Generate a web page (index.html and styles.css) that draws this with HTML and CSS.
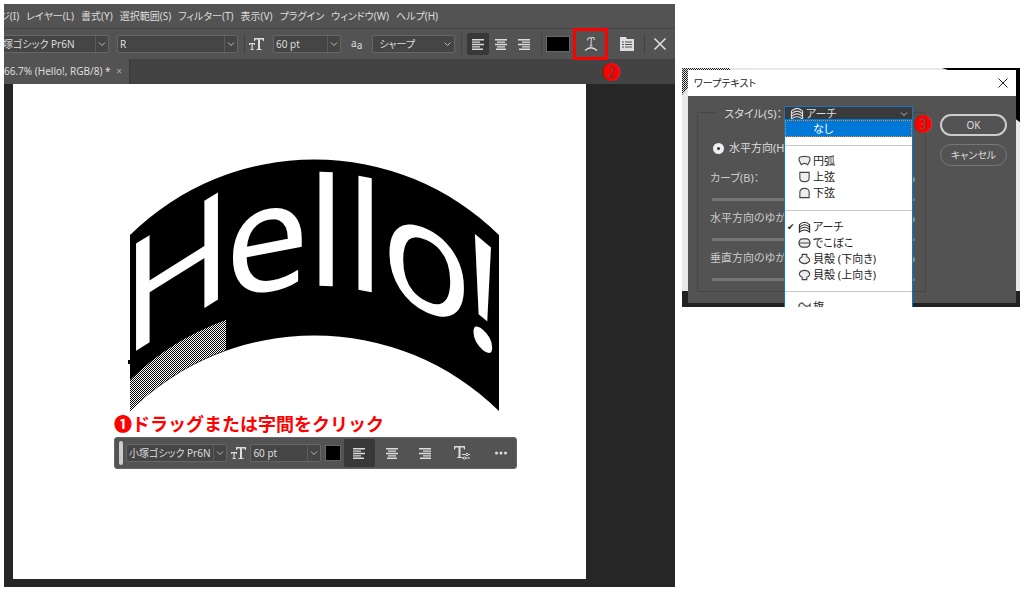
FILE: index.html
```html
<!DOCTYPE html>
<html lang="ja">
<head>
  <meta charset="UTF-8">
  <meta name="viewport" content="width=device-width, initial-scale=1.0">
  <title>ワープテキスト</title>
  <link rel="stylesheet" href="styles.css">
</head>
<body>
  <!-- shared icons -->
  <svg class="sprite" aria-hidden="true">
    <symbol id="chevron" viewBox="0 0 8 8"><path d="M1 2.500l3 3 3-3" fill="none" stroke="#bbb"/></symbol>
    <symbol id="text-size" viewBox="0 0 16 14">
      <path d="M5 1h10v3h-1l-.5-1.500H11V12h1.500v1h-5v-1H9V2.500H6.500L6 4H5z"/>
      <path d="M0 6h6v2h-.7L5 7.200H3.700V12h1v1H1.500v-1h1V7.200H1L.7 8H0z"/>
    </symbol>
    <symbol id="align-left" viewBox="0 0 14 12"><path d="M1 1h12v1.400H1zM1 3.400h8v1.400H1zM1 5.800h12v1.400H1zM1 8.200h8v1.400H1zM1 10.600h11V12H1z"/></symbol>
    <symbol id="align-center" viewBox="0 0 14 12"><path d="M1 1h12v1.400H1zM3 3.400h8v1.400H3zM1 5.800h12v1.400H1zM3 8.200h8v1.400H3zM2 10.600h10V12H2z"/></symbol>
    <symbol id="align-right" viewBox="0 0 14 12"><path d="M1 1h12v1.400H1zM5 3.400h8v1.400H5zM1 5.800h12v1.400H1zM5 8.200h8v1.400H5zM2 10.600h11V12H2z"/></symbol>
    <symbol id="arch" viewBox="0 0 14 14">
      <path d="M1 4.500Q7-1.500 13 4.500V13Q7 8 1 13zM1 7.300Q7 1.500 13 7.300M1 10.200Q7 4.500 13 10.200" fill="none" stroke="currentColor" stroke-width="1.200"/>
    </symbol>
  </svg>

  <div class="page">
    <main class="editor">
      <nav class="menubar">
        <a href="#">ジ(I)</a>
        <a href="#">レイヤー(L)</a>
        <a href="#">書式(Y)</a>
        <a href="#">選択範囲(S)</a>
        <a href="#">フィルター(T)</a>
        <a href="#">表示(V)</a>
        <a href="#">プラグイン</a>
        <a href="#">ウィンドウ(W)</a>
        <a href="#">ヘルプ(H)</a>
      </nav>

      <div class="options">
        <div class="field field-font">
          <select aria-label="フォント"><option>塚ゴシック Pr6N</option></select>
          <svg class="chevron"><use href="#chevron"/></svg>
        </div>
        <div class="field field-style">
          <select aria-label="フォントスタイル"><option>R</option></select>
          <svg class="chevron"><use href="#chevron"/></svg>
        </div>
        <span class="sep"></span>
        <svg class="icon-size"><use href="#text-size"/></svg>
        <div class="field field-size">
          <select aria-label="フォントサイズ"><option>60 pt</option></select>
          <svg class="chevron"><use href="#chevron"/></svg>
        </div>
        <span class="aa"><span class="aa-up">a</span>a</span>
        <div class="field field-alias">
          <select aria-label="アンチエイリアス"><option>シャープ</option></select>
          <svg class="chevron"><use href="#chevron"/></svg>
        </div>
        <span class="sep"></span>
        <div class="aligns">
          <button class="tool active" aria-label="左揃え"><svg class="icon-align"><use href="#align-left"/></svg></button>
          <button class="tool" aria-label="中央揃え"><svg class="icon-align"><use href="#align-center"/></svg></button>
          <button class="tool" aria-label="右揃え"><svg class="icon-align"><use href="#align-right"/></svg></button>
        </div>
        <span class="sep"></span>
        <button class="swatch swatch-wide" aria-label="テキストカラー"></button>
        <button class="warp-button" aria-label="ワープテキスト">
          <svg width="14" height="14" viewBox="0 0 14 14">
            <path d="M3.500 3.500l.5-2.500 6-.5.300 2.500M7.300 1L7 9M5.500 9l3-.2" fill="none" stroke="#ddd"/>
            <path d="M1 13.500Q7 8 13 13.500" fill="none" stroke="#ddd" stroke-width="1.200"/>
          </svg>
          <span class="step step-two">❷</span>
        </button>
        <button class="tool panel-button" aria-label="パネルの切り替え">
          <svg width="14" height="14" viewBox="0 0 14 14">
            <path d="M0 0h6l1 2h7v12H0z" fill="#ddd"/>
            <path d="M2 5h2M5 5h7M2 7.500h2M5 7.500h7M2 10h2M5 10h7" stroke="#535353" stroke-width="1.200"/>
          </svg>
        </button>
        <span class="sep"></span>
        <button class="tool cancel" aria-label="キャンセル">
          <svg width="14" height="14" viewBox="0 0 14 14"><path d="M1.500 1.500l11 11M12.500 1.500l-11 11" stroke="#ddd" stroke-width="1.600"/></svg>
        </button>
      </div>

      <div class="tabs">
        <div class="tab">66.7% (Hello!, RGB/8) * <button aria-label="閉じる">×</button></div>
      </div>

      <div class="workspace">
        <div class="document">
          <div class="artwork">
            <svg class="band" viewBox="0 0 371 253">
              <defs>
                <pattern id="checker" width="2" height="2" patternUnits="userSpaceOnUse">
                  <rect width="2" height="2" fill="#fff"/>
                  <path d="M0 0h1v1H0zM1 1h1v1H1z"/>
                </pattern>
              </defs>
              <path d="M2 77A263 263 0 0 1 371 77V253A263 263 0 0 0 2 253z"/>
              <path d="M2 222A263 263 0 0 1 98 162V192A263 263 0 0 0 2 253z" fill="url(#checker)"/>
              <path d="M0 202h4v4H0z"/>
            </svg>
            <div class="warp"><span class="w1">H</span><span class="w2">e</span><span class="w3">l</span><span class="w4">l</span><span class="w5">o</span><span class="w6">!</span></div>
          </div>

          <p class="caption">❶ドラッグまたは字間をクリック</p>

          <div class="taskbar">
            <span class="grip"></span>
            <div class="field field-task-font">
              <select aria-label="フォント"><option>小塚ゴシック Pr6N</option></select>
              <svg class="chevron"><use href="#chevron"/></svg>
            </div>
            <svg class="icon-size"><use href="#text-size"/></svg>
            <div class="field field-task-size">
              <select aria-label="フォントサイズ"><option>60 pt</option></select>
              <svg class="chevron"><use href="#chevron"/></svg>
            </div>
            <button class="swatch" aria-label="テキストカラー"></button>
            <button class="task active" aria-label="左揃え"><svg class="icon-align"><use href="#align-left"/></svg></button>
            <button class="task" aria-label="中央揃え"><svg class="icon-align"><use href="#align-center"/></svg></button>
            <button class="task" aria-label="右揃え"><svg class="icon-align"><use href="#align-right"/></svg></button>
            <button class="task task-text" aria-label="文字設定">
              <svg width="16" height="14" viewBox="0 0 16 14">
                <path d="M0 0h11v3.500h-1L9.500 1.500H6.500V11H8v1H3v-1h1.500V1.500H1.500L1 3.500H0z" fill="#ddd"/>
                <path d="M8 8.500h8M8 12h8" stroke="#ddd"/>
                <circle cx="13" cy="8.500" r="1.200" fill="#535353" stroke="#ddd"/>
                <circle cx="10.500" cy="12" r="1.200" fill="#535353" stroke="#ddd"/>
              </svg>
            </button>
            <button class="task" aria-label="その他">
              <svg width="14" height="4" viewBox="0 0 14 4" fill="#ddd"><circle cx="2.500" cy="2" r="1.500"/><circle cx="7" cy="2" r="1.500"/><circle cx="11.500" cy="2" r="1.500"/></svg>
            </button>
          </div>
        </div>
      </div>
    </main>

    <aside class="backdrop">
      <svg class="backdrop-art" viewBox="0 0 338 238" preserveAspectRatio="none" aria-hidden="true">
        <path d="M0 0h48v2H6v18L0 27z" fill="url(#checker)"/>
        <path d="M260 0h78v54l-4-3V2h-68z"/>
        <path d="M0 222h338v16H0z" fill="#222"/>
      </svg>

      <section class="dialog">
        <header class="dialog-title">
          <h1>ワープテキスト</h1>
          <button aria-label="閉じる">
            <svg width="10" height="10" viewBox="0 0 10 10"><path d="M.5.500l9 9M9.500.500l-9 9" stroke="#222"/></svg>
          </button>
        </header>
        <div class="dialog-body">
          <div class="group">
            <div class="style-row">
              <label for="style">スタイル(S)：</label>
              <div class="combo">
                <svg class="combo-icon"><use href="#arch"/></svg>
                <select id="style"><option>アーチ</option></select>
                <svg class="combo-arrow"><use href="#chevron"/></svg>
                <ul class="list">
                  <li class="selected">なし</li>
                  <li class="line first"></li>
                  <li><svg viewBox="0 0 14 12"><path d="M1 5Q1 1 4 1.500Q7 .500 10 1.500Q13 1 13 5L10.500 10Q7 7 3.500 10z"/></svg>円弧</li>
                  <li><svg viewBox="0 0 14 12"><path d="M2 1h10v6Q12 11 7 11Q2 11 2 7z"/></svg>上弦</li>
                  <li><svg viewBox="0 0 14 12"><path d="M2 11h10V5.500Q12 1 7 1Q2 1 2 5.500z"/></svg>下弦</li>
                  <li class="line"></li>
                  <li class="checked"><svg><use href="#arch"/></svg>アーチ</li>
                  <li><svg viewBox="0 0 14 12"><path d="M4 1.500H10Q13 3 13 6Q13 9 10 10.500H4Q1 9 1 6Q1 3 4 1.500zM1 6h12"/></svg>でこぼこ</li>
                  <li><svg viewBox="0 0 14 12"><path d="M4.500 1h5v2.500Q13 5 12.500 8Q11 11 7 11Q3 11 1.500 8Q1 5 4.500 3.500z"/></svg>貝殻 (下向き)</li>
                  <li><svg viewBox="0 0 14 12"><path d="M4.500 11h5V8.500Q13 7 12.500 4Q11 1 7 1Q3 1 1.500 4Q1 7 4.500 8.500z"/></svg>貝殻 (上向き)</li>
                  <li class="line last"></li>
                  <li><svg viewBox="0 0 14 12"><path d="M1 4Q4-1 7 4Q10 7 13 3V9Q10 13 7 9Q4 5 1 9z"/></svg>旗</li>
                </ul>
                <span class="step step-three">❸</span>
              </div>
            </div>

            <label class="radio-row"><input type="radio" name="direction" checked>水平方向(H)</label>

            <div class="slider-row">
              <label for="bend">カーブ(B)：</label><span>%</span>
              <input id="bend" type="range">
            </div>
            <div class="slider-row">
              <label for="horizontal">水平方向のゆがみ：</label><span>%</span>
              <input id="horizontal" type="range">
            </div>
            <div class="slider-row">
              <label for="vertical">垂直方向のゆがみ：</label><span>%</span>
              <input id="vertical" type="range">
            </div>
          </div>
          <div class="actions">
            <button class="btn btn-ok">OK</button>
            <button class="btn">キャンセル</button>
          </div>
        </div>
      </section>
    </aside>
  </div>
</body>
</html>
```
FILE: styles.css
```css
* {
  box-sizing: border-box;
}

body {
  margin: 0;
  background-color: #fff;
  color: #ddd;
  font-family: "Noto Sans", "Noto Sans CJK JP", sans-serif;
  font-size: 10px;
  line-height: 16px;
  font-feature-settings: "palt";
}

button,
select,
input {
  margin: 0;
  padding: 0;
  border: none;
  background: none;
  color: inherit;
  font: inherit;
  font-feature-settings: inherit;
}

select {
  appearance: none;
  flex: 1;
  min-width: 0;
}

svg {
  display: block;
  flex: none;
  fill: #ddd;
}

a {
  color: inherit;
  text-decoration: none;
}

.sprite {
  position: absolute;
  width: 0;
  height: 0;
}

.page {
  display: flex;
  align-items: flex-start;
  gap: 7px;
  padding: 4px;
}

/* Editor window */

.editor {
  flex: 2 1 671px;
  min-width: 0;
  overflow: hidden;
  background-color: #535353;
}

.menubar {
  display: flex;
  gap: 7px;
  padding: 4px 0;
  margin-left: -4px;
  white-space: nowrap;
}

.options {
  display: flex;
  align-items: center;
  height: 31px;
  border-top: 1px solid #444;
}

.options > * {
  flex: none;
}

.field {
  display: flex;
  align-items: center;
  height: 18px;
  padding-left: 2px;
  border: 1px solid #666;
  border-radius: 2px;
  background-color: #454545;
}

.chevron {
  width: 13px;
  height: 16px;
  padding: 4px 2px;
  border-left: 1px solid #5c5c5c;
}

.field-font {
  width: 109px;
  margin-left: -4px;
  margin-right: 8px;
}

.field-style {
  width: 121px;
  margin-right: 6px;
}

.field-size {
  width: 68px;
  margin: 0 10px 0 8px;
}

.field-alias {
  width: 83px;
  margin: 0 6px 0 10px;
  padding-left: 6px;
}

.field-alias .chevron {
  border-left: none;
}

.sep {
  width: 1px;
  height: 20px;
  background-color: #444;
}

.icon-size {
  width: 16px;
  height: 14px;
  margin-left: 4px;
}

.aa {
  font-size: 10px;
}

.aa-up {
  vertical-align: 2px;
}

.aligns {
  display: flex;
  gap: 1px;
  margin: 0 6px 0 5px;
}

.tool {
  display: flex;
  align-items: center;
  justify-content: center;
  width: 22px;
  height: 22px;
}

.active {
  border-radius: 2px;
  background-color: #383838;
}

.icon-align {
  width: 14px;
  height: 12px;
}

.swatch {
  width: 16px;
  height: 16px;
  border: 1px solid #666;
  background-color: #000;
}

.swatch-wide {
  width: 24px;
  margin: 0 3px 0 4px;
}

.warp-button {
  position: relative;
  display: flex;
  align-items: center;
  justify-content: center;
  width: 35px;
  height: 32px;
  border: 3px solid #f00;
}

.step {
  position: absolute;
  color: #f00;
  font-family: "Noto Sans CJK JP", sans-serif;
  font-size: 18px;
  line-height: 20px;
}

.step-two {
  top: 30px;
  left: 26px;
}

.panel-button {
  margin: 0 6px 0 8px;
}

.cancel {
  margin-left: 4px;
}

.tabs {
  display: flex;
  background-color: #434343;
}

.tab {
  padding: 4px 4px 5px 0;
  border-right: 1px solid #3a3a3a;
  background-color: #535353;
}

.tab button {
  padding: 0 3px;
  color: #aaa;
}

.workspace {
  padding: 0 89px 8px 9px;
  background-color: #262626;
}

.document {
  padding: 74px 0 110px 101px;
  background-color: #fff;
}

.artwork {
  position: relative;
  width: 371px;
  margin-left: 14px;
}

.band {
  width: 100%;
  fill: #000;
}

/* Arched lettering, laid over the band */
.warp {
  position: absolute;
  inset: 0;
  display: flex;
  align-items: flex-start;
  color: #fff;
  font-family: "Noto Sans", sans-serif;
  font-size: 150px;
  line-height: 140px;
}

.warp span {
  display: flex;
  justify-content: center;
  min-width: 0;
}

.w1 {
  flex: 98;
  transform: translateY(39px) skewY(-32deg);
}

.w2 {
  flex: 82;
  transform: translateY(5px) skewY(-11deg);
}

.w3 {
  flex: 36;
  transform: skewY(2deg);
}

.w4 {
  flex: 42;
  transform: translateY(5px) skewY(11deg);
}

.w5 {
  flex: 81;
  transform: translateY(25px) skewY(25deg);
}

.w6 {
  flex: 32;
  transform: translateY(62px) skewY(40deg);
}

.caption {
  margin: 2px 0 3px;
  color: #f00;
  font-family: "Noto Sans CJK JP", sans-serif;
  font-size: 18px;
  font-weight: bold;
  line-height: 21px;
  font-feature-settings: normal;
}

.taskbar {
  display: flex;
  align-items: center;
  width: 403px;
  height: 32px;
  padding-left: 4px;
  border: 1px solid #666;
  border-radius: 3px;
  background-color: #535353;
}

.grip {
  width: 4px;
  height: 24px;
  margin-right: 3px;
  border-radius: 2px;
  background-color: #ccc;
}

.field-task-font {
  width: 102px;
}

.field-task-size {
  width: 71px;
  margin: 0 4px 0 3px;
}

.task {
  display: flex;
  align-items: center;
  justify-content: center;
  width: 31px;
  height: 28px;
  margin-left: 2px;
}

.taskbar .active {
  margin: 0 0 0 3px;
}

.task-text {
  margin: 0 6px;
}

/* Warp text dialog */

.backdrop {
  position: relative;
  flex: 1 1 338px;
  min-width: 0;
  margin-top: 64px;
  padding: 2px 4px 4px 6px;
  overflow: hidden;
  background-color: #e8e8e8;
}

.backdrop-art {
  position: absolute;
  inset: 0;
  width: 100%;
  height: 100%;
  fill: #000;
}

.dialog {
  position: relative;
  background-color: #535353;
}

.dialog-title {
  display: flex;
  align-items: center;
  justify-content: space-between;
  height: 26px;
  padding: 0 8px 0 6px;
  background-color: #fff;
  color: #222;
}

.dialog-title h1 {
  margin: 0;
  font-size: 10px;
  font-weight: normal;
}

.dialog-body {
  display: flex;
  gap: 14px;
  padding: 16px 9px 11px 9px;
}

.group {
  flex: 1;
  height: 180px;
  padding: 0 10px 0 12px;
  border: 1px solid #474747;
}

.style-row {
  display: flex;
  justify-content: flex-end;
  margin: -7px 2px 0 0;
}

.style-row label {
  padding: 0 2px 0 8px;
  background-color: #535353;
  font-size: 11px;
}

.combo {
  position: relative;
  display: flex;
  align-items: center;
  width: 129px;
  height: 15px;
  padding: 0 4px;
  border: 1px solid #1c6fc4;
  background-color: #3a3a3a;
  font-size: 11px;
}

.combo-icon {
  width: 14px;
  height: 13px;
  margin: 0 2px 0 1px;
}

.combo-arrow {
  width: 8px;
  height: 8px;
}

.list {
  position: absolute;
  top: 12px;
  left: -1px;
  width: 129px;
  margin: 0;
  padding: 0;
  border: 1px solid #0078d7;
  background-color: #fff;
  color: #222;
  list-style: none;
}

.list li {
  display: flex;
  align-items: center;
  gap: 2px;
  height: 16px;
  padding-left: 13px;
  white-space: nowrap;
}

.list .selected {
  height: 17px;
  padding-left: 28px;
  outline: 1px dotted #e08a3a;
  outline-offset: -1px;
  background-color: #0078d7;
  color: #fff;
}

.list .line {
  height: 18px;
  padding: 0;
}

.list .first,
.list .last {
  height: 16px;
}

.line::before {
  content: "";
  flex: 1;
  height: 1px;
  background-color: #c8c8c8;
}

.list .checked {
  padding-left: 2px;
}

.checked::before {
  content: "✔";
  width: 9px;
  font-family: "DejaVu Sans", sans-serif;
  font-size: 9px;
}

.list svg {
  width: 13px;
  height: 12px;
  fill: #eee;
  stroke: #444;
  stroke-width: 1.2;
}

.step-three {
  top: 6px;
  left: 129px;
}

.radio-row {
  display: flex;
  align-items: center;
  gap: 5px;
  margin: 18px 0 0 3px;
  font-size: 11px;
}

.radio-row input {
  appearance: none;
  width: 11px;
  height: 11px;
  border: 4px solid #eee;
  border-radius: 50%;
  background-color: #333;
}

.slider-row {
  display: flex;
  flex-wrap: wrap;
  justify-content: space-between;
  margin-top: 14px;
  font-size: 11px;
  color: #ccc;
}

.slider-row + .slider-row {
  margin-top: 8px;
}

.slider-row input {
  appearance: none;
  width: 100%;
  height: 3px;
  margin: 12px 0 1px 2px;
  background-color: #757575;
}

.slider-row input::-webkit-slider-thumb {
  appearance: none;
  width: 8px;
  height: 3px;
}

.actions {
  display: flex;
  flex-direction: column;
  gap: 8px;
  width: 67px;
}

.btn {
  height: 22px;
  border: 1px solid #777;
  border-radius: 11px;
  text-align: center;
}

.btn-ok {
  margin-top: 2px;
  border: 2px solid #ccc;
}
```
